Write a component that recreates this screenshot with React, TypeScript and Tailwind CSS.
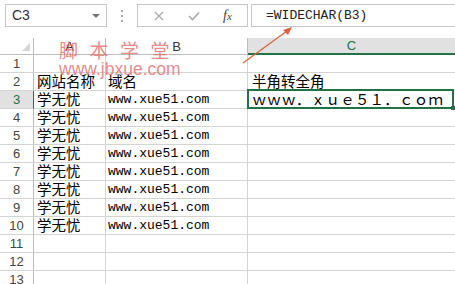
const rows = [
  { n: 1, a: "", b: "", c: "" },
  { n: 2, a: "网站名称", b: "域名", c: "半角转全角" },
  { n: 3, a: "学无忧", b: "www.xue51.com", c: "ｗｗｗ．ｘｕｅ５１．ｃｏｍ", active: true },
  { n: 4, a: "学无忧", b: "www.xue51.com", c: "" },
  { n: 5, a: "学无忧", b: "www.xue51.com", c: "" },
  { n: 6, a: "学无忧", b: "www.xue51.com", c: "" },
  { n: 7, a: "学无忧", b: "www.xue51.com", c: "" },
  { n: 8, a: "学无忧", b: "www.xue51.com", c: "" },
  { n: 9, a: "学无忧", b: "www.xue51.com", c: "" },
  { n: 10, a: "学无忧", b: "www.xue51.com", c: "" },
  { n: 11, a: "", b: "", c: "" },
  { n: 12, a: "", b: "", c: "" },
  { n: 13, a: "", b: "", c: "" },
];

const cjk = "font-['Noto_Sans_CJK_SC',sans-serif]";
const mono = "font-['Liberation_Mono','Noto_Sans_CJK_SC',monospace]";

function Toolbar() {
  return (
    <div className="flex h-[38px] items-start pt-[4px] pl-[5px]">
      <div className="flex h-[23px] w-[102px] items-center justify-between border border-[#c6c6c6] pl-[6px] pr-[6px]">
        <span className="font-['Liberation_Sans',sans-serif] text-[14px] text-[#333]">C3</span>
        <span className="h-0 w-0 border-x-[4px] border-t-[4px] border-x-transparent border-t-[#777]" />
      </div>
      <div className="flex w-[30px] flex-col items-center gap-[3px] pt-[6px]">
        <span className="h-[2px] w-[2px] bg-[#aaa]" />
        <span className="h-[2px] w-[2px] bg-[#aaa]" />
        <span className="h-[2px] w-[2px] bg-[#aaa]" />
      </div>
      <div className="flex h-[23px] w-[111px] items-center border border-[#c6c6c6]">
        <svg width="10" height="10" viewBox="0 0 10 10" className="ml-[16px]">
          <path d="M1 1L9 9M9 1L1 9" stroke="#aaa" strokeWidth="1.2" />
        </svg>
        <svg width="12" height="10" viewBox="0 0 12 10" className="ml-[24px]">
          <path d="M1 5L4.5 8.5L11 1.5" stroke="#aaa" strokeWidth="1.6" fill="none" />
        </svg>
        <span className="ml-[23px] font-['Liberation_Serif',serif] text-[14px] italic text-[#444]">
          f<span className="text-[11px]">x</span>
        </span>
      </div>
      <div className="ml-[3px] flex h-[23px] flex-1 items-center border border-r-0 border-[#c6c6c6] pl-[14px]">
        <span className={`${mono} text-[13px] text-[#222]`}>=WIDECHAR(B3)</span>
      </div>
    </div>
  );
}

function HeaderRow() {
  return (
    <div className="flex h-[17px]">
      <div className="flex w-[34px] shrink-0 items-end justify-end border-r border-b border-[#bdbdbd] pr-[3px] pb-[3px]">
        <svg width="8" height="8" viewBox="0 0 8 8">
          <path d="M8 0L8 8L0 8Z" fill="#d4d4d4" />
        </svg>
      </div>
      <div className="flex w-[72px] shrink-0 items-center justify-center border-r border-b border-[#bdbdbd] bg-white">
        <span className="font-['Liberation_Sans',sans-serif] text-[13px] leading-none text-[#333]">A</span>
      </div>
      <div className="flex w-[142px] shrink-0 items-center justify-center border-r border-b border-[#bdbdbd] bg-white">
        <span className="font-['Liberation_Sans',sans-serif] text-[13px] leading-none text-[#333]">B</span>
      </div>
      <div className="flex flex-1 items-center justify-center border-b-2 border-[#217346] bg-[#e1e1e1]">
        <span className="font-['Liberation_Sans',sans-serif] text-[13px] leading-none text-[#217346]">C</span>
      </div>
    </div>
  );
}

function Row({ r }: { r: (typeof rows)[number] }) {
  return (
    <div className="flex h-[18px]">
      <div
        className={`flex w-[34px] shrink-0 items-center justify-center border-b border-r border-b-[#d4d4d4] font-['Liberation_Sans',sans-serif] text-[13px] ${
          r.active
            ? "border-r-[#217346] bg-[#e1e1e1] text-[#217346]"
            : "border-r-[#bdbdbd] text-[#444]"
        }`}
      >
        {r.n}
      </div>
      <div className={`flex w-[72px] shrink-0 items-center overflow-visible whitespace-nowrap border-b border-r border-[#d4d4d4] pl-[3px] ${cjk} text-[14.5px] leading-none text-black`}>
        {r.a}
      </div>
      <div
        className={`flex w-[142px] shrink-0 items-center whitespace-nowrap border-b border-r border-[#d4d4d4] pl-[2px] ${
          r.n === 2 ? `${cjk} text-[14.5px]` : `${mono} text-[13px] text-[#111]`
        } leading-none text-black`}
      >
        {r.b}
      </div>
      <div className={`relative flex flex-1 items-center whitespace-nowrap border-b border-[#d4d4d4] pl-[4px] ${cjk} text-[14.5px] leading-none text-black`}>
        {r.active && (
          <>
            <span className="absolute -top-[2px] -bottom-px -left-px right-[1px] border-2 border-[#217346]" />
            <span className="absolute -bottom-[2px] right-0 h-[4px] w-[4px] bg-[#217346]" />
          </>
        )}
        {r.active ? <span className="tracking-[0.2px]">{r.c}</span> : r.c}
      </div>
    </div>
  );
}

export default function App() {
  return (
    <div className="relative h-[284px] w-[455px] overflow-hidden bg-white">
      <Toolbar />
      <HeaderRow />
      {rows.map((r) => (
        <Row key={r.n} r={r} />
      ))}

      {/* watermark */}
      <div className="pointer-events-none absolute left-[59px] top-[39px] flex flex-col items-start text-[#e46b6b]/80">
        <span className={`${cjk} text-[19px] leading-[22px] tracking-[11.5px]`}>脚本学堂</span>
        <span className="font-['Liberation_Sans',sans-serif] text-[17.5px] leading-[16px]">www.jbxue.com</span>
      </div>

      {/* annotation arrow */}
      <svg className="pointer-events-none absolute left-0 top-0" width="455" height="284">
        <line x1="243" y1="63" x2="287" y2="31" stroke="#d9653b" strokeWidth="1.3" />
        <path d="M292 27L283 30L288 35Z" fill="#d9653b" />
      </svg>
    </div>
  );
}
